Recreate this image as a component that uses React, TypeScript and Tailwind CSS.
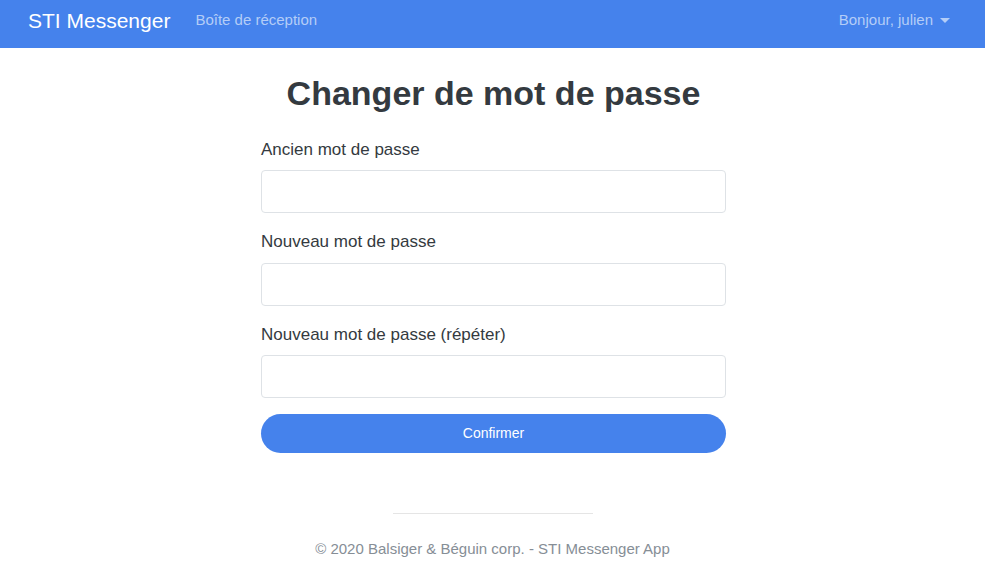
const fields = ["Ancien mot de passe", "Nouveau mot de passe", "Nouveau mot de passe (répéter)"]

const App = () => {
    return (
        <div className="min-h-[577px] bg-white font-['Liberation_Sans',Arial,sans-serif] text-[#343a40]">
            <nav className="h-12 bg-[#4582ec] flex items-center justify-between px-7 pb-[7px]">
                <div className="flex items-center">
                    <span className="text-[21px] text-white leading-none">STI Messenger</span>
                    <span className="ml-[25px] text-[15px] text-[#b4cdf7]">Boîte de réception</span>
                </div>
                <div className="flex items-center mr-[7px] text-[15px] text-[#b4cdf7]">
                    <span>Bonjour, julien</span>
                    <span className="ml-[7px] w-0 h-0 border-x-[5px] border-x-transparent border-t-[5px] border-t-[#b4cdf7]" />
                </div>
            </nav>

            <main className="w-[467px] mx-auto pl-[2px] pt-[25px]">
                <h1 className="text-[34px] font-bold leading-[1.2] text-center text-[#343a40]">Changer de mot de passe</h1>
                <form className="mt-[23px]">
                    {fields.map((label) => (
                        <div key={label} className="mb-4">
                            <label className="block text-[17px] leading-[1.5] mb-2 text-[#343a40]">{label}</label>
                            <input type="password" className="block w-full h-[43px] border border-[#dee2e6] rounded px-3 outline-none" />
                        </div>
                    ))}
                    <button type="button" className="w-full h-[39px] rounded-[20px] bg-[#4582ec] text-white text-[14px]">
                        Confirmer
                    </button>
                </form>
            </main>

            <footer className="mt-[60px] flex flex-col items-center">
                <div className="w-[200px] border-t border-[#e5e5e5]" />
                <p className="mt-[24px] text-[15px] text-[#868e96]">© 2020 Balsiger &amp; Béguin corp. - STI Messenger App</p>
            </footer>
        </div>
    )
}

export default App
